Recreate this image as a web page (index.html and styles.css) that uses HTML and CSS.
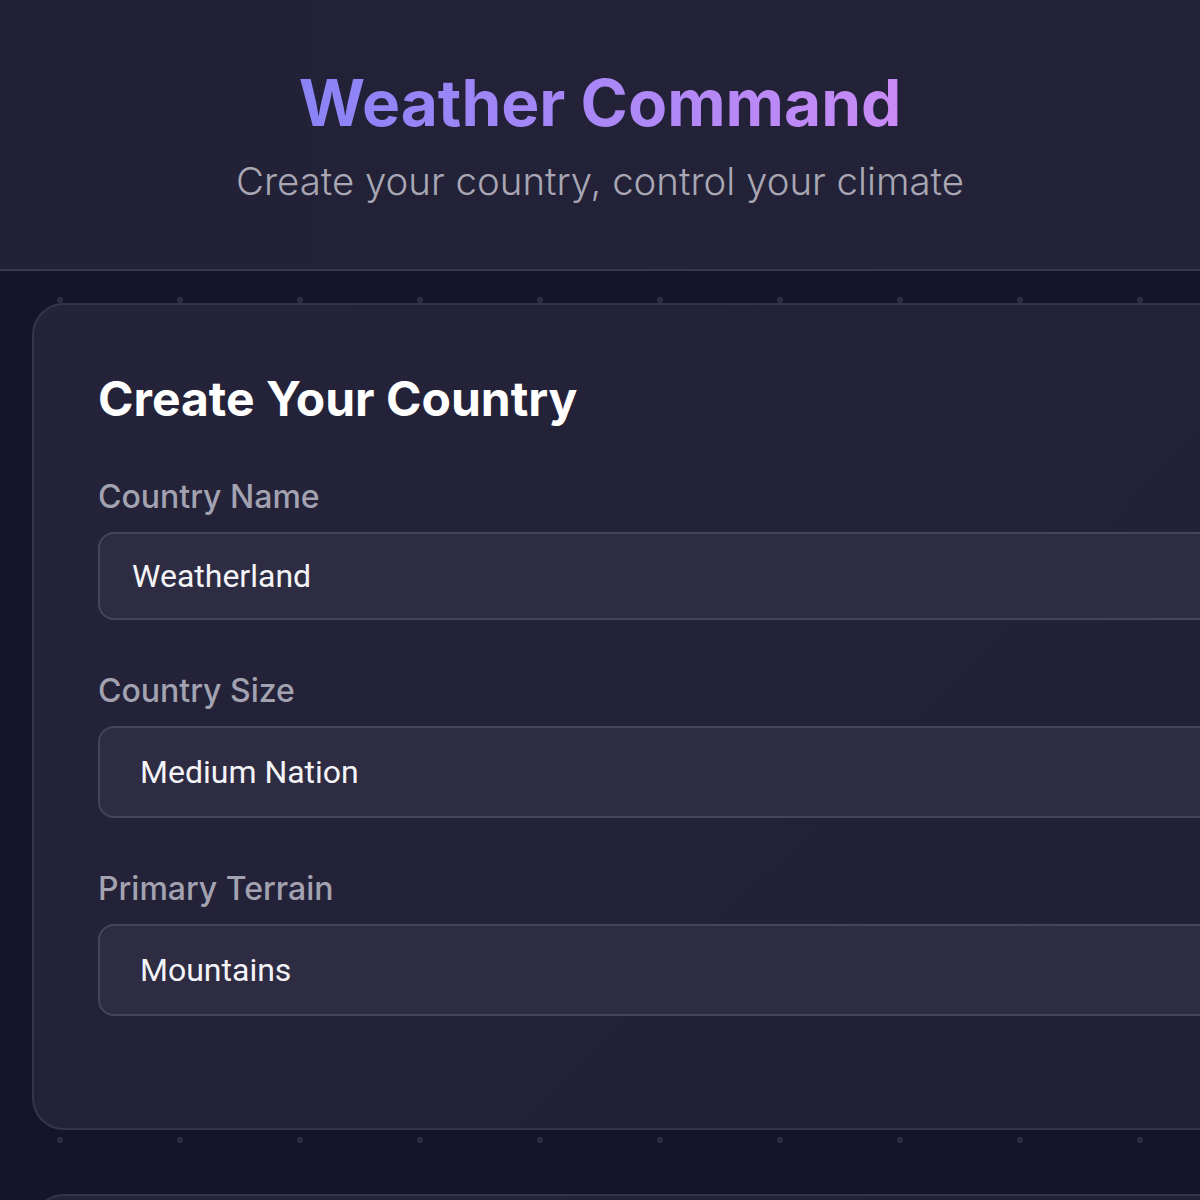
FILE: index.html
```html
<!DOCTYPE html>
<html lang="en">
<head>
    <meta charset="UTF-8">
    <meta name="viewport" content="width=device-width, initial-scale=1.0">
    <title>Weather Command</title>
    <link rel="stylesheet" href="styles.css">
</head>
<body>
    <header class="header">
        <h1>Weather Command</h1>
        <p>Create your country, control your climate</p>
    </header>

    <main class="dashboard">
        <section class="card">
            <h2>Create Your Country</h2>

            <div class="form-group">
                <label for="countryName">Country Name</label>
                <input type="text" id="countryName" class="form-input" value="Weatherland">
            </div>

            <div class="form-group">
                <label for="countrySize">Country Size</label>
                <select id="countrySize" class="form-select">
                    <option value="small">Small Nation</option>
                    <option value="medium" selected>Medium Nation</option>
                    <option value="large">Large Nation</option>
                </select>
            </div>

            <div class="form-group">
                <label for="terrain">Primary Terrain</label>
                <select id="terrain" class="form-select">
                    <option value="plains">Plains</option>
                    <option value="mountains" selected>Mountains</option>
                    <option value="coastal">Coastal</option>
                    <option value="desert">Desert</option>
                    <option value="forest">Forest</option>
                </select>
            </div>
        </section>

        <section class="card">
            <h2>Climate Controls</h2>
        </section>
    </main>
</body>
</html>
```

FILE: styles.css
```css
* {
    margin: 0;
    padding: 0;
    box-sizing: border-box;
}

html {
    scrollbar-width: none;
}

body {
    font-family: 'Inter', 'Noto Sans', sans-serif;
    background-color: #15142a;
    background-image: radial-gradient(circle, #2c2b44 3px, transparent 3.5px);
    background-size: 120px 120px;
    color: #ffffff;
    min-height: 100vh;
    overflow-x: hidden;
}

.header {
    background: linear-gradient(90deg, #222137, #232238);
    border-bottom: 2px solid #38374d;
    padding: 64px 20px 65px;
    text-align: center;
}

.header h1 {
    font-size: 64px;
    font-weight: 700;
    margin-bottom: 17px;
    display: inline-block;
    background: linear-gradient(90deg, #8a83f6, #c98bf6);
    -webkit-background-clip: text;
    background-clip: text;
    color: transparent;
}

.header p {
    font-size: 38.4px;
    font-weight: 300;
    color: #a8a7b3;
}

.dashboard {
    width: 1480px;
    padding: 32px;
    display: flex;
    flex-direction: column;
    gap: 64px;
}

.card {
    background: linear-gradient(135deg, #242339, #222039);
    border: 2px solid #35344b;
    border-radius: 32px;
    padding: 64px;
}

.card h2 {
    font-size: 48px;
    font-weight: 700;
    color: #ffffff;
    margin-bottom: 50px;
}

.form-group {
    margin-bottom: 52px;
}

.form-group:last-child {
    margin-bottom: 48px;
}

.form-group label {
    display: block;
    font-size: 32px;
    line-height: 38px;
    font-weight: 500;
    color: #a3a2b0;
    margin-bottom: 16px;
}

.form-input,
.form-select {
    display: block;
    width: 100%;
    font-family: 'Roboto', sans-serif;
    font-size: 32px;
    color: #f4f4f8;
    background: #2e2c42;
    border: 2px solid #45445a;
    border-radius: 16px;
    outline: none;
}

.form-input {
    height: 88px;
    padding: 0 32px;
}

.form-select {
    height: 92px;
    padding: 0 40px;
    appearance: none;
    -webkit-appearance: none;
    cursor: pointer;
}
```
